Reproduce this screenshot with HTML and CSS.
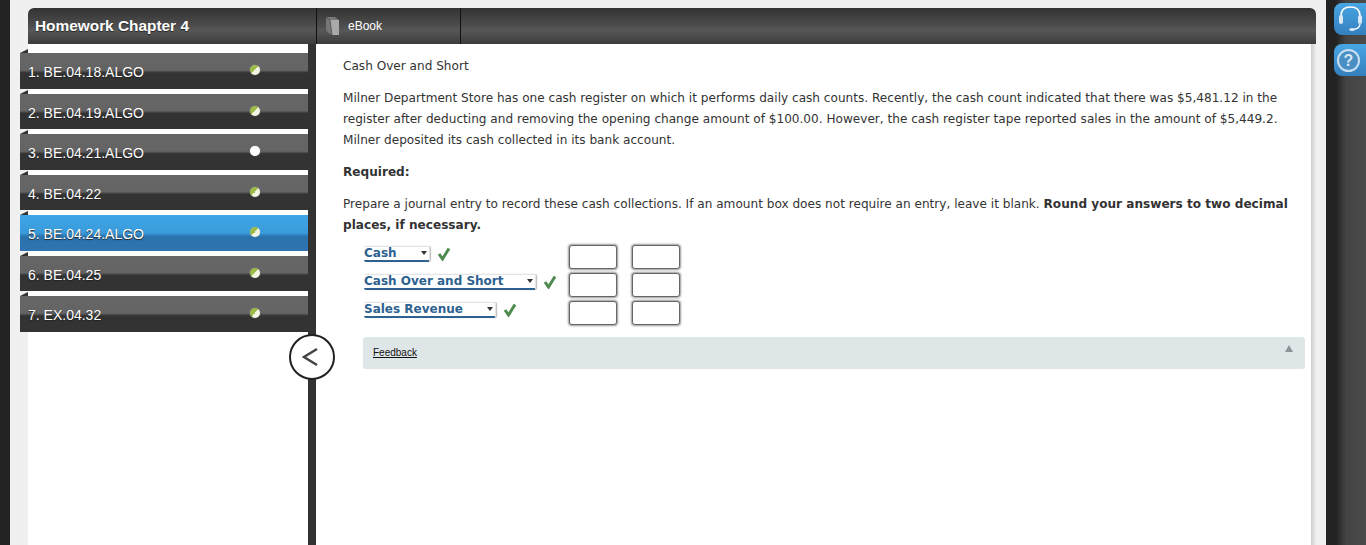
FILE: index.html
```html
<!DOCTYPE html>
<html lang="en">

<head>
  <meta charset="UTF-8">
  <title>Homework Chapter 4</title>
  <link rel="stylesheet" href="styles.css">
</head>

<body>
  <div class="edge-left"></div>

  <div class="main">
    <div class="topbar">
      <h1 class="assignment-title">Homework Chapter 4</h1>
      <div class="tab-ebook">
        <svg class="book-icon" width="16" height="20" viewBox="0 0 16 20">
          <path d="M1 3 Q1 1 3 1 L10 1 L14 4 L14 19 L7 19 Q1 16 1 13 Z" fill="#777" />
          <path d="M5 4 L14 4 L14 19 L7 19 Z" fill="#a9a9a9" />
          <path d="M1 2 L5 4 L7 19" fill="none" stroke="#5c5c5c" stroke-width="1" />
        </svg>
        <span>eBook</span>
      </div>
    </div>

    <div class="workspace">
      <!-- question list -->
      <nav class="sidebar">
        <ul class="question-list">
          <li class="question"><span>1. BE.04.18.ALGO</span><i class="dot done"></i></li>
          <li class="question"><span>2. BE.04.19.ALGO</span><i class="dot done"></i></li>
          <li class="question"><span>3. BE.04.21.ALGO</span><i class="dot"></i></li>
          <li class="question"><span>4. BE.04.22</span><i class="dot done"></i></li>
          <li class="question active"><span>5. BE.04.24.ALGO</span><i class="dot done"></i></li>
          <li class="question"><span>6. BE.04.25</span><i class="dot done"></i></li>
          <li class="question"><span>7. EX.04.32</span><i class="dot done"></i></li>
        </ul>
        <button class="collapse" type="button">
          <svg width="18" height="20" viewBox="0 0 18 20">
            <path d="M15 2 L2 10 L15 18" fill="none" stroke="#444" stroke-width="2.5" />
          </svg>
        </button>
      </nav>

      <!-- question body -->
      <section class="content">
        <p>Cash Over and Short</p>
        <p>Milner Department Store has one cash register on which it performs daily cash counts. Recently, the cash count indicated that there was $5,481.12 in the register after deducting and removing the opening change amount of $100.00. However, the cash register tape reported sales in the amount of $5,449.2. Milner deposited its cash collected in its bank account.</p>
        <p><b>Required:</b></p>
        <p>Prepare a journal entry to record these cash collections. If an amount box does not require an entry, leave it blank. <b>Round your answers to two decimal places, if necessary.</b></p>

        <div class="journal">
          <div class="journal-row">
            <div class="account-cell">
              <span class="account w-cash">Cash</span>
              <svg class="check" width="14" height="14" viewBox="0 0 14 14"><path d="M2 7 L5.5 12 L12 1.5" fill="none" stroke="#4f8a4f" stroke-width="3" /></svg>
            </div>
            <input class="amount" type="text">
            <input class="amount" type="text">
          </div>
          <div class="journal-row">
            <div class="account-cell">
              <span class="account w-over">Cash Over and Short</span>
              <svg class="check" width="14" height="14" viewBox="0 0 14 14"><path d="M2 7 L5.5 12 L12 1.5" fill="none" stroke="#4f8a4f" stroke-width="3" /></svg>
            </div>
            <input class="amount" type="text">
            <input class="amount" type="text">
          </div>
          <div class="journal-row">
            <div class="account-cell">
              <span class="account w-sales">Sales Revenue</span>
              <svg class="check" width="14" height="14" viewBox="0 0 14 14"><path d="M2 7 L5.5 12 L12 1.5" fill="none" stroke="#4f8a4f" stroke-width="3" /></svg>
            </div>
            <input class="amount" type="text">
            <input class="amount" type="text">
          </div>
        </div>

        <div class="feedback">
          <a href="#">Feedback</a>
          <span class="feedback-arrow"></span>
        </div>
      </section>
    </div>
  </div>

  <div class="edge-right">
    <button class="side-btn" type="button">
      <svg width="30" height="30" viewBox="0 0 30 30">
        <path d="M6 12 C6 5 10 3 15.5 3 C21 3 25 5 25 12" fill="none" stroke="#fff" stroke-width="1.6" />
        <rect x="4" y="11" width="4" height="9" rx="2" fill="#d8e8f4" />
        <rect x="23" y="11" width="4" height="9" rx="2" fill="#d8e8f4" />
        <path d="M25 20 C25 23 22 25 18 25.5" fill="none" stroke="#fff" stroke-width="1.3" />
        <ellipse cx="17" cy="25.5" rx="2.8" ry="1.5" fill="#d8e8f4" />
      </svg>
    </button>
    <button class="side-btn" type="button">
      <span class="help">?</span>
    </button>
  </div>
</body>

</html>
```
FILE: styles.css
```css
html,
body {
  height: 100%;
  margin: 0;
}

body {
  display: flex;
  overflow: hidden;
  background: #f0f0f0;
  font-family: "Liberation Sans", Arial, sans-serif;
}

.edge-left {
  flex: 0 0 10px;
  background: #222;
}

.main {
  flex: 1;
  display: flex;
  flex-direction: column;
  min-width: 0;
  padding: 8px 10px 0 18px;
}

/* top bar */
.topbar {
  flex: 0 0 36px;
  display: flex;
  border-radius: 6px 6px 0 0;
  background: linear-gradient(#333 0, #4e4e4e 50%, #575757 62%, #3c3c3c 100%);
  color: #fff;
}

.assignment-title {
  width: 289px;
  margin: 0;
  padding-left: 7px;
  box-sizing: border-box;
  border-right: 1px solid #111;
  font-size: 15.4px;
  line-height: 36px;
  text-shadow: 0 1px 1px #222;
}

.tab-ebook {
  display: flex;
  align-items: center;
  width: 143px;
  height: 36px;
  box-sizing: border-box;
  margin-left: 1px;
  padding-left: 7px;
  border-right: 1px solid #111;
  font-size: 12px;
}

.book-icon {
  margin-right: 7px;
}

.workspace {
  flex: 1;
  display: flex;
  min-height: 0;
}

/* sidebar */
.sidebar {
  position: relative;
  flex: 0 0 280px;
  background: #fff;
  border-right: 8px solid #333;
}

.question-list {
  list-style: none;
  margin: 9px 0 0 -8px;
  padding: 0;
}

.question {
  position: relative;
  display: flex;
  align-items: center;
  justify-content: space-between;
  height: 35.5px;
  margin-bottom: 5px;
  padding: 3px 48px 0 8px;
  box-sizing: border-box;
  background: linear-gradient(#666 0, #646464 48%, #333 55%, #333 100%);
  color: #fff;
  font-size: 14px;
  text-shadow: 0 1px 1px #222;
}

.question::before {
  content: "";
  position: absolute;
  top: -4px;
  left: 0;
  border-bottom: 4px solid #333;
  border-left: 8px solid transparent;
}

.question.active {
  background: linear-gradient(#3ea6e4 0, #3a9bdb 50%, #2b72ad 60%, #2f74b0 100%);
}

.dot {
  width: 10px;
  height: 10px;
  margin-top: -4px;
  border-radius: 50%;
  background: #fff;
  box-shadow: 0 0 1px #ccc;
}

.dot.done {
  background: linear-gradient(135deg, #9dbb4a 0 50%, #f1f5e2 50% 100%);
}

.collapse {
  position: absolute;
  top: 290px;
  left: 261px;
  width: 46px;
  height: 46px;
  padding: 0 3px 0 0;
  border: 2.5px solid #222;
  border-radius: 50%;
  background: #fff;
  display: flex;
  align-items: center;
  justify-content: center;
}

/* content */
.content {
  flex: 1;
  min-width: 0;
  padding: 12px 11px 0 27px;
  background: linear-gradient(90deg, #fff calc(100% - 5px), #ccc calc(100% - 5px), #eee 100%);
  color: #333;
  font-family: "DejaVu Sans", Verdana, sans-serif;
  font-size: 12.1px;
  line-height: 21px;
}

.content p {
  margin: 0 0 11px;
}

.journal {
  margin: -3px 0 0 21px;
}

.journal-row {
  display: flex;
  align-items: flex-start;
  gap: 15px;
  height: 28px;
}

.account-cell {
  display: flex;
  align-items: center;
  gap: 7px;
  width: 190px;
  height: 19px;
}

.check {
  flex-shrink: 0;
}

.account {
  position: relative;
  flex-shrink: 0;
  box-sizing: border-box;
  height: 16px;
  border: 1px solid #e4e4e4;
  border-left: none;
  border-bottom: 2px solid #2d6190;
  border-radius: 2px;
  box-shadow: 1px 0 1px #bbb;
  color: #2d6190;
  font-weight: bold;
  font-size: 12px;
  line-height: 13px;
}

.account::after {
  content: "";
  position: absolute;
  top: 4px;
  right: 2px;
  border-top: 4px solid #333;
  border-left: 3.5px solid transparent;
  border-right: 3.5px solid transparent;
}

.w-cash {
  width: 66px;
}

.w-over {
  width: 172px;
}

.w-sales {
  width: 132px;
}

.amount {
  flex-shrink: 0;
  width: 48px;
  height: 24px;
  box-sizing: border-box;
  margin-top: 1px;
  border: 1px solid #666;
  border-radius: 3px;
  box-shadow: 0 0 2px 1px #999;
  background: #fff;
}

.feedback {
  position: relative;
  margin: 9px 0 0 20px;
  height: 32px;
  padding-left: 10px;
  border-radius: 3px;
  background: #dfe6e8;
  font-family: "Liberation Sans", Arial, sans-serif;
  font-size: 10px;
  line-height: 32px;
}

.feedback a {
  color: #111;
}

.feedback-arrow {
  position: absolute;
  top: 8px;
  right: 12px;
  border-bottom: 7px solid #8c9498;
  border-left: 4px solid transparent;
  border-right: 4px solid transparent;
}

/* right strip */
.edge-right {
  flex: 0 0 40px;
  display: flex;
  flex-direction: column;
  gap: 9px;
  padding: 3px 0 0 8px;
  box-sizing: border-box;
  background: linear-gradient(90deg, #222 0, #222 10px, #444 20px, #4a4a4a 100%);
}

.side-btn {
  width: 32px;
  height: 32px;
  padding: 0 0 0 1px;
  border: none;
  border-radius: 8px 0 0 8px;
  background: linear-gradient(#48a6e4, #357fbe);
  display: flex;
  align-items: center;
}

.help {
  width: 19px;
  height: 19px;
  margin-left: 2px;
  border: 2.5px solid #c8dfef;
  border-radius: 50%;
  background: #4a8fc4;
  color: #d8e8f4;
  font: bold 16px/19px "Liberation Sans", Arial, sans-serif;
  text-align: center;
}
```
